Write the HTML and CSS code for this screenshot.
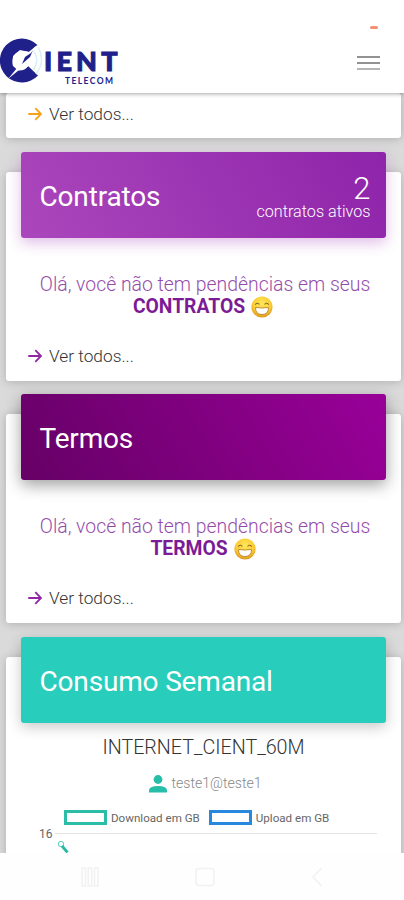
FILE: index.html
```html
<!DOCTYPE html>
<html lang="pt-BR">
<head>
<meta charset="utf-8">
<title>Cient Telecom</title>
<link rel="stylesheet" href="styles.css">
</head>
<body>
<svg class="defs" width="0" height="0" aria-hidden="true">
  <defs>
    <radialGradient id="face" cx=".5" cy=".35" r=".65"><stop offset="0" stop-color="#ffe75c"/><stop offset=".65" stop-color="#fbcc34"/><stop offset="1" stop-color="#d9951e"/></radialGradient>
    <symbol id="grin" viewBox="0 0 22 22">
      <circle cx="11" cy="11" r="10.6" fill="url(#face)"/>
      <path d="M4 8.500Q6.200 6 8.500 8.200M13.500 8.200Q15.800 6 18 8.500" fill="none" stroke="#80591c" stroke-width="1"/>
      <path d="M4.500 11.500Q11 12.500 17.500 11.500Q17.500 18.500 11 18.500Q4.500 18.500 4.500 11.500Z" fill="#fff" stroke="#b27a24" stroke-width=".8"/>
    </symbol>
    <symbol id="arrow" viewBox="0 0 14 14"><path d="M.3 7H12.500M7.300 1.200L13 7L7.300 12.800" fill="none" stroke="currentColor" stroke-width="1.800"/></symbol>
  </defs>
</svg>
<header class="topbar">
  <div class="brand">
    <svg class="mark" viewBox="0 0 44 48" width="44" height="48">
      <path d="M37.500 8A22 22 0 1 0 38 38.500L28 29Q25 34 18 33.500L13 29Q11 22 15 17Q20 12 29 15Z" fill="#20208a"/>
      <path d="M8 42L17 31L13 28L13 19L20 13L29 15L37 8L26 24L31 25Q27 33 19 33Z" fill="#fff"/>
      <path d="M22 27L25 20L31 16L33 13L30 20Z" fill="#20208a"/>
      <path d="M38 10Q46 24 36 37M34 14Q40 24 33 33" fill="none" stroke="#dbeff6" stroke-width="1.500"/>
    </svg>
    <div class="words"><span class="name">IENT</span><span class="sub">TELECOM</span></div>
  </div>
  <div class="tools"><i class="dash"></i><div class="burger"><i></i><i></i><i></i></div></div>
</header>
<main>
  <section class="card first">
    <a class="more orange"><svg width="14" height="14"><use href="#arrow"/></svg><span>Ver todos...</span></a>
  </section>
  <section class="card">
    <div class="head contracts"><h2>Contratos</h2><div class="count"><b>2</b><span>contratos ativos</span></div></div>
    <p class="msg"><span class="line">Olá, você não tem pendências em seus</span><span class="row"><strong>CONTRATOS</strong><svg width="22" height="22"><use href="#grin"/></svg></span></p>
    <a class="more"><svg width="14" height="14"><use href="#arrow"/></svg><span>Ver todos...</span></a>
  </section>
  <section class="card">
    <div class="head terms"><h2>Termos</h2></div>
    <p class="msg"><span class="line">Olá, você não tem pendências em seus</span><span class="row"><strong>TERMOS</strong><svg width="22" height="22"><use href="#grin"/></svg></span></p>
    <a class="more"><svg width="14" height="14"><use href="#arrow"/></svg><span>Ver todos...</span></a>
  </section>
  <section class="card">
    <div class="head usage"><h2>Consumo Semanal</h2></div>
    <h3>INTERNET_CIENT_60M</h3>
    <div class="user"><svg width="18" height="18" viewBox="0 0 18 18" fill="#26bda9"><circle cx="9" cy="4.500" r="4.400"/><path d="M0 17.500V15.500Q0 11 9 11T18 15.500V17.500Z"/></svg><span>teste1@teste1</span></div>
    <div class="legend"><i></i><span>Download em GB</span><i class="up"></i><span>Upload em GB</span></div>
    <div class="axis"><span>16</span><hr></div>
    <svg class="point" width="14" height="14" viewBox="0 0 14 14"><circle cx="4" cy="4" r="2.700" fill="#f4fffd" stroke="#65cec1"/><path d="M5 6L10.500 12.500" stroke="#26b9a6" stroke-width="2.800"/></svg>
  </section>
</main>
<nav>
  <svg width="18" height="20" viewBox="0 0 18 20"><path d="M1 1H4.500V19H1ZM7.200 1H10.700V19H7.200ZM13.500 1H17V19H13.500Z"/></svg>
  <svg width="20" height="20" viewBox="0 0 20 20"><rect x="1" y="1.500" width="18" height="17" rx="3"/></svg>
  <svg width="12" height="20" viewBox="0 0 12 20"><path d="M10.500 1L2 10L10.500 19"/></svg>
</nav>
</body>
</html>
```
FILE: styles.css
```css
* { box-sizing: border-box; }
body { margin: 0; width: 404px; height: 900px; overflow: hidden; background: #fefefe; font-family: Roboto, sans-serif; color: #333; }
h2, h3, p { margin: 0; }
i { display: block; }
svg { display: block; flex: none; }
.defs { position: absolute; }
.topbar { position: relative; z-index: 2; height: 93px; background: #fff; box-shadow: 0 1px 4px rgba(0,0,0,.35); display: flex; justify-content: space-between; }
.brand { display: flex; padding-top: 37px; }
.words { display: flex; flex-direction: column; color: #20208a; padding-top: 8px; }
.name { font: 900 27px/32px Lato, sans-serif; letter-spacing: 4.200px; -webkit-text-stroke: 1px #20208a; }
.sub { font: 700 8.500px/11px Lato, sans-serif; letter-spacing: 1.400px; margin: -1px 0 0 21px; }
.tools { width: 48px; padding-top: 26px; }
.dash { width: 8px; height: 3px; border-radius: 2px; background: #f49172; margin-left: 14px; }
.burger { width: 23px; margin: 27px 0 0 1px; display: grid; gap: 4px; }
.burger i { height: 2px; background: #929292; }
.burger i:last-child { background: #b5b5b5; }
main { height: 760px; overflow: hidden; background: #dadada; }
.card { width: 395px; height: 208.500px; margin: 0 0 33.800px 6px; background: #fff; border-radius: 3px; box-shadow: 0 1px 10px rgba(0,0,0,.2); display: flow-root; }
.first { height: 45px; padding-top: 10px; margin-bottom: 34px; }
.head { width: 365px; height: 86px; margin: -20px 0 0 14.500px; border-radius: 3px; color: #fff; padding: 0 15px 0 19px; display: flex; align-items: center; justify-content: space-between; }
.head h2 { font-size: 28px; font-weight: 400; line-height: 36px; letter-spacing: -.170px; padding-top: 4px; }
.contracts { background: linear-gradient(60deg, #ab47bc, #8e24aa); box-shadow: 0 5px 14px rgba(156,39,176,.3); }
.terms { background: linear-gradient(60deg, #660066, #990099); box-shadow: 0 5px 16px rgba(0,0,0,.38); }
.usage { background: #29cdbb; box-shadow: 0 4px 14px rgba(0,0,0,.22); }
.count { text-align: right; font-weight: 300; padding-top: 6px; }
.count b { display: block; font-weight: 300; font-size: 31px; line-height: 27px; }
.count span { display: block; font-size: 16.200px; line-height: 19px; }
.msg { height: 107px; padding-top: 35.500px; font-size: 19.400px; line-height: 22px; color: #7b1b96; font-weight: 300; text-align: center; }
.line { display: block; white-space: nowrap; opacity: .8; padding-left: 3px; }
.row { display: flex; justify-content: center; gap: 6px; padding-right: 1px; }
.msg strong { font-weight: 700; font-size: 19.300px; }
.more { display: flex; align-items: center; gap: 7px; height: 22px; padding-left: 22px; font-size: 17.300px; font-weight: 300; color: #9224a6; }
.more span { color: #333; }
.orange { color: #f6a01c; }
h3 { font-size: 19.700px; font-weight: 300; line-height: 24px; margin-top: 13px; text-align: center; }
.user { display: flex; justify-content: center; align-items: center; gap: 4px; margin-top: 14px; height: 21px; padding-left: 4px; font-size: 14.100px; font-weight: 300; color: #888; }
.user span { padding-bottom: 3px; }
.legend { display: flex; align-items: center; height: 16px; margin-top: 15px; padding-left: 58px; font: 11.600px Roboto, sans-serif; color: #666; white-space: nowrap; }
.legend i { width: 43px; height: 15px; border: 3px solid #2cbda9; margin-right: 4px; }
.legend .up { border-color: #2788dd; margin-left: 9px; }
.axis { display: flex; align-items: center; height: 14px; margin-top: 1px; padding-left: 33px; font-size: 12px; color: #666; }
.axis hr { width: 322px; margin: 0 0 0 2px; border: 0; border-top: 1px solid #e4e4e4; }
.point { margin: -1px 0 0 51px; }
nav { height: 47px; display: flex; justify-content: space-between; align-items: center; padding: 0 81px 0 81px; background: #fefefe; }
nav svg { fill: none; stroke: #f1f1f1; stroke-width: 1.500; }
```
